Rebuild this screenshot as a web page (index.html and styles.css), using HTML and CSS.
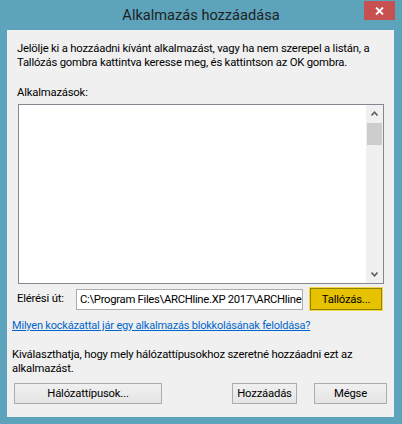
FILE: index.html
```html
<!DOCTYPE html>
<html lang="hu">
<head>
<meta charset="utf-8">
<title>Alkalmazás hozzáadása</title>
<link rel="stylesheet" href="styles.css">
</head>
<body>
<div class="window">
  <div class="titlebar">
    <span class="title">Alkalmazás hozzáadása</span>
    <button class="close" aria-label="Bezárás">
      <svg width="9" height="8" viewBox="0 0 9 8"><path d="M1 0.5 L8 7.5 M8 0.5 L1 7.5" stroke="#fff" stroke-width="1.8" fill="none"/></svg>
    </button>
  </div>
  <div class="client">
    <p class="intro">Jelölje ki a hozzáadni kívánt alkalmazást, vagy ha nem szerepel a listán, a<br>Tallózás gombra kattintva keresse meg, és kattintson az OK gombra.</p>
    <div class="list-label">Alkalmazások:</div>
    <div class="listbox">
      <div class="list-body"></div>
      <div class="scrollbar">
        <div class="arrow">
          <svg width="7" height="5" viewBox="0 0 7 5"><path d="M0.5 4.5 L3.5 1.2 L6.5 4.5" stroke="#606060" stroke-width="1.6" fill="none"/></svg>
        </div>
        <div class="thumb"></div>
        <div class="track"></div>
        <div class="arrow">
          <svg width="7" height="5" viewBox="0 0 7 5"><path d="M0.5 0.5 L3.5 3.8 L6.5 0.5" stroke="#606060" stroke-width="1.6" fill="none"/></svg>
        </div>
      </div>
    </div>
    <div class="path-row">
      <span class="path-label">Elérési út:</span>
      <div class="path-input">C:\Program Files\ARCHline.XP 2017\ARCHline</div>
      <button class="btn browse">Tallózás...</button>
    </div>
    <a class="link" href="#">Milyen kockázattal jár egy alkalmazás blokkolásának feloldása?</a>
    <p class="note">Kiválaszthatja, hogy mely hálózattípusokhoz szeretné hozzáadni ezt az<br>alkalmazást.</p>
    <div class="actions">
      <button class="btn net">Hálózattípusok...</button>
      <div class="spacer"></div>
      <button class="btn add">Hozzáadás</button>
      <button class="btn cancel">Mégse</button>
    </div>
  </div>
</div>
</body>
</html>
```
FILE: styles.css
```css
html, body {
  margin: 0;
  padding: 0;
  background: #5ca3bb;
}

.window {
  width: 402px;
  height: 424px;
  background: #5ca3bb;
  display: flex;
  flex-direction: column;
  font-family: Roboto, "Noto Sans", sans-serif;
  font-size: 11.3px;
  letter-spacing: -0.2px;
  color: #000;
}

.titlebar {
  height: 30px;
  display: grid;
  grid-template-columns: 1fr;
  grid-template-rows: 30px;
}

.title {
  grid-area: 1 / 1;
  justify-self: center;
  line-height: 30px;
  font-size: 14.6px;
  letter-spacing: 0;
  color: #1f1f1f;
}

.close {
  grid-area: 1 / 1;
  justify-self: end;
  align-self: start;
  margin: 1px 7px 0 0;
  width: 31px;
  height: 19px;
  padding: 0;
  border: none;
  background: #c75050;
  display: flex;
  align-items: center;
  justify-content: center;
}

.client {
  margin: 0 8px 7px 7px;
  height: 387px;
  background: #f0f0f0;
  box-sizing: border-box;
  padding: 12px 7px 0 5px;
  display: flex;
  flex-direction: column;
  line-height: 14px;
}

.intro {
  margin: 0 0 0 5px;
  white-space: nowrap;
}

.list-label {
  margin: 16px 0 0 5px;
}

.listbox {
  margin: 4px 0 0 6px;
  width: 366px;
  height: 180px;
  box-sizing: border-box;
  border: 1px solid #828790;
  background: #fff;
  display: flex;
}

.list-body {
  flex: 1;
}

.scrollbar {
  width: 17px;
  background: #f0f0f0;
  display: flex;
  flex-direction: column;
}

.arrow {
  height: 17px;
  display: flex;
  align-items: center;
  justify-content: center;
}

.thumb {
  margin: 1px 1px 0 1px;
  height: 22px;
  background: #cdcdcd;
}

.track {
  flex: 1;
}

.path-row {
  margin: 4px 0 0 5px;
  display: flex;
  align-items: center;
}

.path-label {
  width: 59px;
}

.path-input {
  width: 227px;
  height: 21px;
  box-sizing: border-box;
  border: 1px solid #acacac;
  background: #fff;
  padding: 0 0 0 3px;
  line-height: 19px;
  letter-spacing: -0.3px;
  white-space: nowrap;
  overflow: hidden;
}

.btn {
  font-family: inherit;
  font-size: inherit;
  letter-spacing: inherit;
  color: #000;
  padding: 0;
  box-sizing: border-box;
  height: 21px;
  border: 1px solid #acacac;
  background: linear-gradient(#f0f0f0, #e5e5e5);
}

.browse {
  margin-left: 7px;
  width: 72px;
  height: 22px;
  background: #e6c200;
  border: 1px solid #8e8200;
  box-shadow: 0 0 0 1px #f2d64e;
}

.link {
  margin-top: 9px;
  color: #0066cc;
  font-size: 11px;
  text-decoration: underline;
  align-self: flex-start;
}

.note {
  margin: 15px 0 0 0;
  white-space: nowrap;
}

.actions {
  margin: 7px 0 0 2px;
  display: flex;
}

.net { width: 148px; }
.spacer { flex: 1; }
.add { width: 65px; margin-right: 17px; }
.cancel { width: 73px; }
```
